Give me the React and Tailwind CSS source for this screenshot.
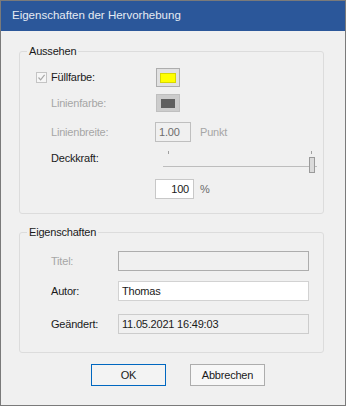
import React from "react";

const font = { fontFamily: '"Liberation Sans", Arial, sans-serif' };

function Row({ children, className = "" }) {
  return <div className={`flex items-center ${className}`}>{children}</div>;
}

function Slider() {
  return (
    <svg width="156" height="22" viewBox="0 0 156 22" className="ml-[7px]">
      <rect x="6" y="0" width="1" height="3" fill="#a0a0a0" />
      <rect x="149" y="0" width="1" height="3" fill="#a0a0a0" />
      <rect x="1" y="15" width="154" height="1" fill="#bdbdbd" />
      <rect x="147.5" y="6.5" width="5" height="15" fill="#dadada" stroke="#9a9a9a" />
    </svg>
  );
}

export default function App() {
  return (
    <div
      className="w-[346px] h-[406px] border border-[#7a7a7a] bg-[#f0f0f0] flex flex-col text-[11px] tracking-[-0.2px] text-[#1a1a1a]"
      style={font}
    >
      {/* TITLE BAR */}
      <div className="h-[30px] bg-[#2b579a] flex items-center pl-[11px] text-[#e6ebf3] text-[11.5px] tracking-normal">
        Eigenschaften der Hervorhebung
      </div>

      {/* AUSSEHEN */}
      <fieldset className="mt-[12px] ml-[18px] w-[305px] h-[171px] border border-[#dcdcdc] rounded-[3px] pl-[16px]">
        <legend className="ml-[-9px] px-[2px] leading-[16px]">Aussehen</legend>

        <Row className="mt-[9px] h-[19px]">
          <div className="w-[15px]">
            <div className="w-[11px] h-[11px] border border-[#c4c4c4] bg-[#f6f6f6] flex items-center justify-center">
              <svg width="9" height="9" viewBox="0 0 9 9">
                <path d="M1.5 4.5 L3.6 6.8 L7.6 1.8" fill="none" stroke="#a8a8a8" strokeWidth="1.2" />
              </svg>
            </div>
          </div>
          <div className="w-[104px]">Füllfarbe:</div>
          <div className="ml-[1px] w-[24px] h-[19px] border border-[#adadad] bg-[#e1e1e1] flex items-center justify-center">
            <div className="w-[16px] h-[10px] bg-[#ffff00] border border-[#d8d800]" />
          </div>
        </Row>

        <Row className="mt-[7px] h-[18px]">
          <div className="w-[15px]" />
          <div className="w-[104px] text-[#a6a6a6]">Linienfarbe:</div>
          <div className="ml-[1px] w-[24px] h-[18px] border border-[#bfbfbf] bg-[#cccccc] flex items-center justify-center">
            <div className="w-[14px] h-[9px] bg-[#5f5f5f]" />
          </div>
        </Row>

        <Row className="mt-[10px] h-[20px]">
          <div className="w-[15px]" />
          <div className="w-[104px] text-[#a6a6a6]">Linienbreite:</div>
          <div className="w-[36px] h-[20px] border border-[#bfbfbf] bg-[#f0f0f0] pl-[3px] flex items-center text-[#6d6d6d]">
            1.00
          </div>
          <div className="ml-[9px] text-[#a6a6a6]">Punkt</div>
        </Row>

        <Row className="mt-[9px] h-[22px]">
          <div className="w-[15px]" />
          <div className="w-[104px] self-start mt-[-1px]">Deckkraft:</div>
          <Slider />
        </Row>

        <Row className="mt-[6px] h-[20px]">
          <div className="w-[119px]" />
          <div className="w-[39px] h-[20px] border border-[#c8c8c8] bg-white pr-[4px] flex items-center justify-end">
            100
          </div>
          <div className="ml-[6px] text-[#6a6a6a]">%</div>
        </Row>
      </fieldset>

      {/* EIGENSCHAFTEN */}
      <fieldset className="mt-[10px] ml-[18px] w-[305px] h-[129px] border border-[#dcdcdc] rounded-[3px] pl-[31px]">
        <legend className="ml-[-24px] px-[2px] leading-[16px]">Eigenschaften</legend>

        <Row className="mt-[11px] h-[20px]">
          <div className="w-[67px] text-[#a6a6a6]">Titel:</div>
          <div className="w-[191px] h-[20px] border border-[#adadad] bg-[#f0f0f0]" />
        </Row>

        <Row className="mt-[10px] h-[20px]">
          <div className="w-[67px]">Autor:</div>
          <div className="w-[191px] h-[20px] border border-[#d2d2d2] bg-white pl-[3px] flex items-center">
            Thomas
          </div>
        </Row>

        <Row className="mt-[13px] h-[20px]">
          <div className="w-[67px]">Geändert:</div>
          <div className="w-[191px] h-[20px] border border-[#cccccc] bg-[#f0f0f0] pl-[3px] flex items-center">
            11.05.2021 16:49:03
          </div>
        </Row>
      </fieldset>

      {/* BUTTONS */}
      <div className="mt-[11px] ml-[90px] flex gap-[24px]">
        <button className="w-[75px] h-[22px] border border-[#0067c0] bg-[#f3f3f3] text-[#1a1a1a] tracking-[-0.2px]">OK</button>
        <button className="w-[75px] h-[22px] border border-[#adadad] bg-[#f7f7f7] text-[#1a1a1a] tracking-[-0.2px]">Abbrechen</button>
      </div>
    </div>
  );
}
